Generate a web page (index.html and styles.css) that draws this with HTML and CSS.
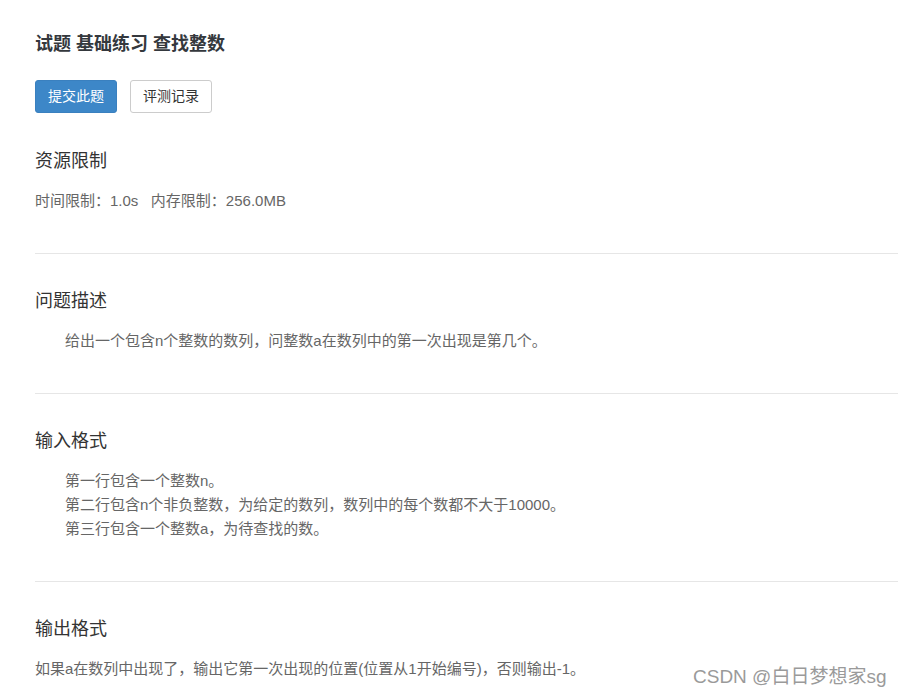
FILE: index.html
```html
<!DOCTYPE HTML>
<html lang="zh-CN">
<head>
    <meta charset="utf-8">
    <title>试题 基础练习 查找整数</title>
<link rel="stylesheet" href="styles.css">
</head>
<body>
<div class="page">
<h3 class="title">试题 基础练习 查找整数</h3>
<div class="actions">
  <a class="btn btn-primary" href="#">提交此题</a>
  <a class="btn btn-default" href="#">评测记录</a>
</div>

<h4 class="first">资源限制</h4>
<div class="content">时间限制：1.0s&nbsp;&nbsp;&nbsp;内存限制：256.0MB</div>
<hr>

<h4>问题描述</h4>
<div class="content indent">给出一个包含n个整数的数列，问整数a在数列中的第一次出现是第几个。</div>
<hr>

<h4>输入格式</h4>
<div class="content indent">第一行包含一个整数n。<br>
第二行包含n个非负整数，为给定的数列，数列中的每个数都不大于10000。<br>
第三行包含一个整数a，为待查找的数。</div>
<hr>

<h4>输出格式</h4>
<div class="content">如果a在数列中出现了，输出它第一次出现的位置(位置从1开始编号)，否则输出-1。</div>
</div>
<div class="mark">CSDN @白日梦想家sg</div>
</body>
</html>
```

FILE: styles.css
```css
body {
  margin: 0;
  font-family: "Liberation Sans", "Noto Sans CJK SC", sans-serif;
  font-size: 15px;
  color: #666;
  background: #fff;
  overflow: hidden;
}
.page {
  padding: 33px 0 0 35px;
}
.title {
  margin: 0;
  font-size: 18px;
  line-height: 22px;
  font-weight: bold;
  color: #34383d;
}
.actions {
  display: flex;
  gap: 13px;
  margin-top: 25px;
}
.btn {
  display: inline-block;
  padding: 6px 12px;
  line-height: 19px;
  font-size: 14px;
  border: 1px solid transparent;
  border-radius: 3px;
  text-decoration: none;
}
.btn-primary {
  background: #3d87c8;
  border-color: #3a80bf;
  color: #fff;
}
.btn-default {
  background: #fff;
  border-color: #ccc;
  color: #333;
}
h4 {
  margin: 35px 0 0 0;
  font-size: 18px;
  line-height: 24px;
  font-weight: normal;
  color: #333;
}
h4.first {
  margin-top: 36px;
}
.content {
  margin-top: 16px;
  line-height: 24px;
}
.indent {
  padding-left: 30px;
}
hr {
  margin: 40px 0 0 0;
  border: 0;
  border-top: 1px solid #e6e6e6;
}
.mark {
  position: absolute;
  left: 693px;
  top: 665px;
  font-size: 19px;
  line-height: 24px;
  color: #9a9a9a;
  text-shadow: 0 0 1px #fff;
}
```
